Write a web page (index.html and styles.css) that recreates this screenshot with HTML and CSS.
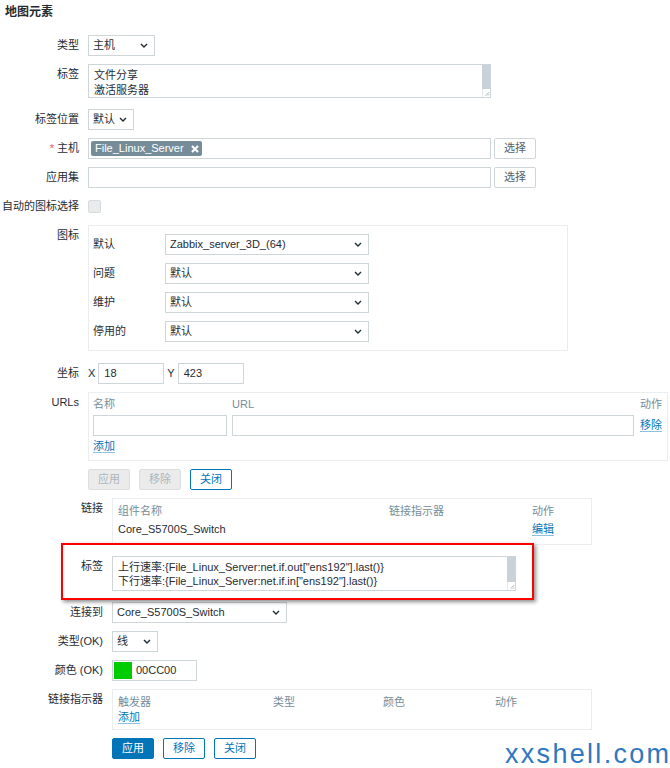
FILE: index.html
```html
<!DOCTYPE html>
<html lang="zh-CN">
<head>
    <meta charset="UTF-8">
    <meta name="viewport" content="width=device-width, initial-scale=1.0">
    <title>地图元素</title>

    <link rel="stylesheet" href="styles.css">
</head>
<body>
    <div class="page">
        <h1 class="title">地图元素</h1>

        <div class="form">
            <div class="row">
                <div class="lbl">类型</div>
                <div class="select w-type"><span>主机</span><svg class="chev" width="8" height="5" viewBox="0 0 8 5"><path d="M1 1l3 3 3-3"/></svg></div>
            </div>

            <div class="row row-ta">
                <div class="lbl">标签</div>
                <div class="textarea ta-main">
                    <div class="ta-text">文件分享<br>激活服务器</div>
                    <div class="ta-scroll">
                        <div class="thumb"></div>
                        <div class="grip"><svg width="8" height="8" viewBox="0 0 8 8"><path d="M7 3L3 7M7 5.5L5.5 7"/></svg></div>
                    </div>
                </div>
            </div>

            <div class="row">
                <div class="lbl">标签位置</div>
                <div class="select w-pos"><span>默认</span><svg class="chev" width="8" height="5" viewBox="0 0 8 5"><path d="M1 1l3 3 3-3"/></svg></div>
            </div>

            <div class="row">
                <div class="lbl"><span class="req">*</span> 主机</div>
                <div class="multi">
                    <span class="tag">File_Linux_Server <svg width="8" height="8" viewBox="0 0 8 8"><path d="M1 1l6 6M7 1L1 7"/></svg></span>
                </div>
                <button class="btn btn-plain">选择</button>
            </div>

            <div class="row">
                <div class="lbl">应用集</div>
                <div class="input w-wide"></div>
                <button class="btn btn-plain">选择</button>
            </div>

            <div class="row">
                <div class="lbl">自动的图标选择</div>
                <div class="check-wrap"><span class="checkbox"></span></div>
            </div>

            <div class="row row-icons">
                <div class="lbl">图标</div>
                <div class="box icon-box">
                    <div class="icon-lbl">默认</div>
                    <div class="select w-icon"><span>Zabbix_server_3D_(64)</span><svg class="chev" width="8" height="5" viewBox="0 0 8 5"><path d="M1 1l3 3 3-3"/></svg></div>
                    <div class="icon-lbl">问题</div>
                    <div class="select w-icon"><span>默认</span><svg class="chev" width="8" height="5" viewBox="0 0 8 5"><path d="M1 1l3 3 3-3"/></svg></div>
                    <div class="icon-lbl">维护</div>
                    <div class="select w-icon"><span>默认</span><svg class="chev" width="8" height="5" viewBox="0 0 8 5"><path d="M1 1l3 3 3-3"/></svg></div>
                    <div class="icon-lbl">停用的</div>
                    <div class="select w-icon"><span>默认</span><svg class="chev" width="8" height="5" viewBox="0 0 8 5"><path d="M1 1l3 3 3-3"/></svg></div>
                </div>
            </div>

            <div class="row">
                <div class="lbl">坐标</div>
                <div class="coords">
                    <span class="axis">X</span>
                    <div class="input w-coord">18</div>
                    <span class="axis">Y</span>
                    <div class="input w-coord">423</div>
                </div>
            </div>

            <div class="row">
                <div class="lbl">URLs</div>
                <div class="box url-box">
                    <div class="th">名称</div>
                    <div class="th">URL</div>
                    <div class="th">动作</div>
                    <div class="input w-url-name"></div>
                    <div class="input w-url"></div>
                    <div class="cell-link"><a class="link">移除</a></div>
                    <div class="add-cell"><a class="link">添加</a></div>
                </div>
            </div>

            <div class="row row-btns">
                <div class="lbl"></div>
                <div class="btns">
                    <button class="btn btn-off">应用</button>
                    <button class="btn btn-off">移除</button>
                    <button class="btn btn-alt">关闭</button>
                </div>
            </div>
        </div>

        <div class="form sub">
            <div class="row row-links">
                <div class="lbl">链接</div>
                <div class="box link-box">
                    <div class="th">组件名称</div>
                    <div class="th">链接指示器</div>
                    <div class="th">动作</div>
                    <div class="td">Core_S5700S_Switch</div>
                    <div class="td"></div>
                    <div class="td"><a class="link">编辑</a></div>
                </div>
            </div>

            <div class="row row-ta marked">
                <div class="lbl">标签</div>
                <div class="textarea ta-link">
                    <div class="ta-text">上行速率:{File_Linux_Server:net.if.out["ens192"].last()}<br>下行速率:{File_Linux_Server:net.if.in["ens192"].last()}</div>
                    <div class="ta-scroll">
                        <div class="thumb"></div>
                        <div class="grip"><svg width="8" height="8" viewBox="0 0 8 8"><path d="M7 3L3 7M7 5.5L5.5 7"/></svg></div>
                    </div>
                </div>
            </div>

            <div class="row">
                <div class="lbl">连接到</div>
                <div class="select w-link"><span>Core_S5700S_Switch</span><svg class="chev" width="8" height="5" viewBox="0 0 8 5"><path d="M1 1l3 3 3-3"/></svg></div>
            </div>

            <div class="row">
                <div class="lbl">类型(OK)</div>
                <div class="select w-line"><span>线</span><svg class="chev" width="8" height="5" viewBox="0 0 8 5"><path d="M1 1l3 3 3-3"/></svg></div>
            </div>

            <div class="row">
                <div class="lbl">颜色 (OK)</div>
                <div class="input color-input"><span class="swatch"></span><span>00CC00</span></div>
            </div>

            <div class="row">
                <div class="lbl">链接指示器</div>
                <div class="box ind-box">
                    <div class="th">触发器</div>
                    <div class="th">类型</div>
                    <div class="th">颜色</div>
                    <div class="th">动作</div>
                    <div class="add-cell"><a class="link">添加</a></div>
                </div>
            </div>

            <div class="row row-btns">
                <div class="lbl"></div>
                <div class="btns">
                    <button class="btn btn-main">应用</button>
                    <button class="btn btn-alt">移除</button>
                    <button class="btn btn-alt">关闭</button>
                </div>
            </div>
        </div>

        <div class="watermark">xxshell.com</div>
    </div>
</body>
</html>
```

FILE: styles.css
```css
/* Reset */
*,
*::before,
*::after {
    margin: 0;
    padding: 0;
    box-sizing: border-box;
}

body {
    font-family: "Liberation Sans", Arial, "Noto Sans CJK SC", sans-serif;
    font-size: 11px;
    color: #1f2c33;
    background-color: #fff;
}

.page {
    position: relative;
    height: 768px;
    overflow: hidden;
}

.title {
    font-size: 12px;
    line-height: 16px;
    font-weight: bold;
    margin: 4px 0 15px 5px;
}

/* Form rows */
.row {
    display: flex;
    align-items: flex-start;
    gap: 9px;
    margin-bottom: 8px;
}

.row-ta {
    margin-bottom: 11px;
}

.row-icons {
    margin-bottom: 12px;
}

.row-links {
    margin-bottom: 11px;
}

.lbl {
    width: 79px;
    flex-shrink: 0;
    text-align: right;
    line-height: 21px;
    white-space: nowrap;
}

.sub .lbl {
    width: 103px;
}

.req {
    color: #e45959;
}

/* Inputs */
.input,
.select,
.multi {
    height: 21px;
    border: 1px solid #cfd6da;
    background-color: #fff;
    line-height: 19px;
    white-space: nowrap;
}

.input {
    padding: 0 5px;
}

.select {
    display: flex;
    align-items: center;
    justify-content: space-between;
    padding: 0 6px 0 4px;
}

.chev path {
    fill: none;
    stroke: #1f2c33;
    stroke-width: 1.4;
}

.w-type { width: 67px; }
.w-pos { width: 46px; }
.w-wide { width: 403px; }
.w-icon { width: 204px; }
.w-coord { width: 66px; }
.w-url-name { width: 134px; }
.w-url { width: 402px; }
.w-link { width: 175px; }
.w-line { width: 46px; }

.multi {
    width: 403px;
    padding: 2px;
}

.tag {
    display: inline-flex;
    align-items: center;
    gap: 7px;
    height: 15px;
    padding: 0 3px 0 4px;
    border-radius: 2px;
    background-color: #768d99;
    color: #fff;
    line-height: 15px;
    vertical-align: top;
}

.tag path {
    stroke: #fff;
    stroke-width: 2.2;
}

/* Fake textareas */
.textarea {
    display: flex;
    border: 1px solid #cfd6da;
    background-color: #fff;
}

.ta-main {
    width: 403px;
    height: 34px;
}

.ta-link {
    width: 404px;
    height: 35px;
}

.ta-text {
    flex: 1;
    padding: 3px 5px 0;
    line-height: 15px;
    white-space: nowrap;
    overflow: hidden;
}

.ta-link .ta-text {
    padding-top: 3px;
    line-height: 14px;
}

.ta-scroll {
    width: 8px;
    display: flex;
    flex-direction: column;
}

.thumb {
    flex: 1;
    background-color: #c9d2d8;
}

.grip {
    height: 8px;
    border-left: 1px solid #e4e8eb;
    display: flex;
}

.grip path {
    stroke: #9ba6ad;
    stroke-width: 1;
}

/* Checkbox */
.check-wrap {
    height: 21px;
    display: flex;
    align-items: center;
}

.checkbox {
    width: 13px;
    height: 13px;
    border: 1px solid #d5dcdf;
    border-radius: 2px;
    background-color: #ebebeb;
}

/* Boxes */
.box {
    border: 1px solid #ebeef0;
    background-color: #fff;
}

.icon-box {
    width: 480px;
    padding: 8px 4px;
    display: grid;
    grid-template-columns: 72px 204px;
    row-gap: 8px;
}

.icon-lbl {
    line-height: 21px;
}

.coords {
    display: flex;
    align-items: center;
    gap: 3px;
}

.axis {
    line-height: 21px;
}

.url-box {
    width: 580px;
    padding: 3px 4px 6px;
    display: grid;
    grid-template-columns: 139px 408px auto;
}

.th {
    color: #768d99;
    line-height: 16px;
    padding-bottom: 3px;
}

.cell-link {
    line-height: 21px;
}

.add-cell {
    grid-column: 1 / -1;
    line-height: 16px;
    padding-top: 2px;
}

.link {
    color: #0275b8;
    text-decoration: none;
    border-bottom: 1px solid rgba(2, 117, 184, 0.45);
    cursor: pointer;
}

.link-box {
    width: 480px;
    padding: 4px 5px 5px;
    display: grid;
    grid-template-columns: 271px 143px auto;
}

.link-box .th {
    padding-bottom: 0;
}

.td {
    line-height: 20px;
}

.ind-box {
    width: 480px;
    padding: 4px 5px 4px;
    display: grid;
    grid-template-columns: 155px 110px 112px auto;
}

.ind-box .th {
    padding-bottom: 0;
}

.ind-box .add-cell {
    line-height: 15px;
    padding-top: 0;
}

.color-input {
    width: 85px;
    display: flex;
    align-items: center;
    gap: 4px;
    padding: 0 2px 0 1px;
}

.swatch {
    width: 18px;
    height: 17px;
    background-color: #00cc00;
}

/* Buttons */
.btns {
    display: flex;
    gap: 9px;
}

.btn {
    height: 21px;
    padding: 0 9px;
    font-family: inherit;
    font-size: 11px;
    line-height: 19px;
    border: 1px solid #cfd6da;
    border-radius: 2px;
    background-color: #fff;
    color: #1f2c33;
    cursor: pointer;
}

.btn-plain {
    margin-left: -6px;
    color: #53616a;
}

.btn-off {
    background-color: #ebebeb;
    border-color: #dcdfe1;
    color: #acb6bc;
}

.btn-alt {
    border-color: #0275b8;
    color: #0275b8;
}

.btn-main {
    background-color: #0275b8;
    border-color: #0275b8;
    color: #fff;
}

/* Annotation frame over the label row */
.marked {
    position: relative;
}

.marked::after {
    content: "";
    position: absolute;
    top: -13px;
    left: 61px;
    width: 473px;
    height: 57px;
    border: 2px solid #f00;
    box-shadow: 2px 2px 4px rgba(0, 0, 0, 0.45);
    pointer-events: none;
}

.watermark {
    position: absolute;
    left: 505px;
    top: 741px;
    font-size: 27px;
    line-height: 27px;
    letter-spacing: 2.3px;
    color: #2f78bf;
}
```
